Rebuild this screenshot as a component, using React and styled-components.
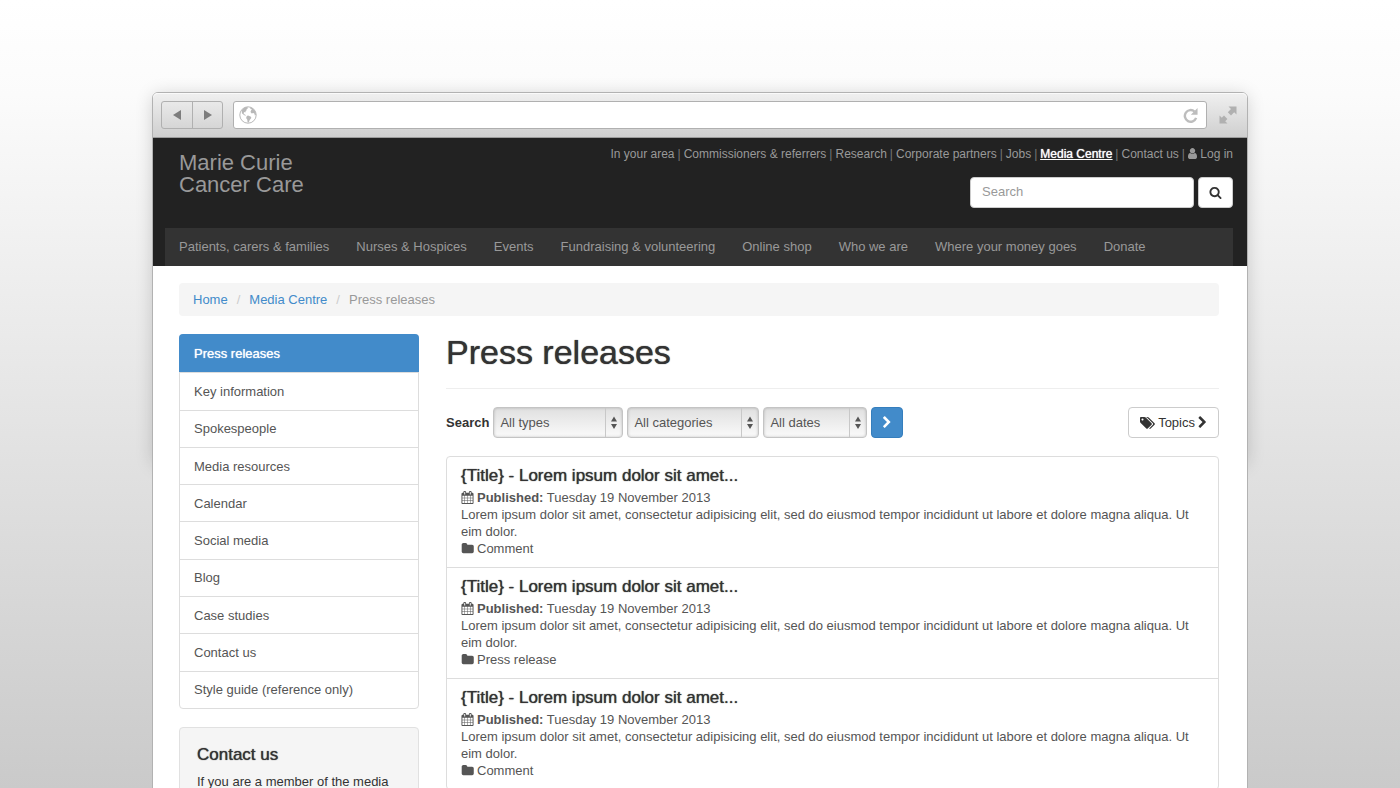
import React from "react";
import styled, { createGlobalStyle } from "styled-components";

const GlobalStyle = createGlobalStyle`
  *, *::before, *::after { box-sizing: border-box; }
  body {
    margin: 0;
    color: #333;
    font-family: "Liberation Sans", Arial, Helvetica, sans-serif;
    font-size: 13px;
    line-height: 17px;
  }
  button, input, select { font: inherit; }
  h1, h2, h3, p, ul, ol { margin: 0; padding: 0; }
  ul, ol { list-style: none; }
  a { text-decoration: none; }
`;

const Stage = styled.div`
  position: relative;
  z-index: 0;
  height: 100vh;
  overflow: hidden;
  padding: 92px 152px 0;
  background: linear-gradient(#fff 0%, #fbfbfb 12%, #cacaca 100%);
`;

const BrowserWindow = styled.div`
  position: relative;
  min-height: 100vh;
  border: 1px solid #b2b2b2;
  border-radius: 6px 6px 0 0;
  background: #fff;
  &::before {
    content: "";
    position: absolute;
    inset: 0 0 auto;
    z-index: -1;
    height: 370px;
    border-radius: 6px;
    box-shadow: 0 2px 18px rgba(0, 0, 0, 0.18);
  }
`;

const Chrome = styled.div`
  display: flex;
  align-items: center;
  gap: 10px;
  height: 45px;
  padding: 0 10px 0 8px;
  border-bottom: 1px solid #9c9c9c;
  border-radius: 5px 5px 0 0;
  background: linear-gradient(#f0f0f0, #cfcfcf);
  box-shadow: inset 0 1px 0 #fafafa;
`;

const HistoryButtons = styled.div`
  display: flex;
  height: 28px;
  border: 1px solid #b0b0b0;
  border-radius: 3px;
`;

const HistoryButton = styled.button`
  display: grid;
  place-items: center;
  width: 30px;
  padding: 0;
  border: 0;
  background: transparent;
  color: #7d7d7d;
  & + & { border-left: 1px solid #b0b0b0; }
`;

const AddressBar = styled.div`
  display: flex;
  flex: 1;
  align-items: center;
  height: 28px;
  margin-right: 2px;
  padding: 0 8px 0 5px;
  border: 1px solid #b0b0b0;
  border-radius: 3px;
  background: #fff;
`;

const AddressInput = styled.input`
  flex: 1;
  min-width: 0;
  border: 0;
  outline: 0;
  background: transparent;
`;

const IconButton = styled.button`
  display: grid;
  place-items: center;
  padding: 0;
  border: 0;
  background: transparent;
`;

const SiteHeader = styled.header`
  padding: 8px 14px 0 12px;
  background: #222;
  color: #999;
`;

const HeaderTop = styled.div`
  display: flex;
  justify-content: space-between;
  height: 82px;
  padding-left: 14px;
`;

const Logo = styled.a`
  padding-top: 6px;
  color: #999;
  font-size: 22px;
  line-height: 22px;
`;

const HeaderTools = styled.div`
  display: flex;
  flex-direction: column;
  align-items: flex-end;
  gap: 14px;
`;

const UtilityLinks = styled.ul`
  display: flex;
  font-size: 12px;
  white-space: nowrap;
  li + li::before { content: "|"; margin: 0 3px; color: #777; }
`;

const UtilityLink = styled.a`
  color: ${(p) => (p.$current ? "#fff" : "#999")};
  text-decoration: ${(p) => (p.$current ? "underline" : "none")};
  text-shadow: ${(p) => (p.$current ? "0 0 1px #fff" : "none")};
  svg { vertical-align: -2px; }
`;

const SearchForm = styled.form`
  display: flex;
  gap: 4px;
`;

const SearchInput = styled.input`
  width: 224px;
  height: 31px;
  padding: 0 11px 2px;
  border: 1px solid #ccc;
  border-radius: 4px;
  background: #fff;
  color: #555;
  &::placeholder { color: #999; opacity: 1; }
`;

const Button = styled.button`
  display: inline-flex;
  align-items: center;
  justify-content: center;
  gap: 3px;
  height: 31px;
  padding: 0 10px;
  border: 1px solid ${(p) => (p.$primary ? "#357ebd" : "#ccc")};
  border-radius: 4px;
  background: ${(p) => (p.$primary ? "#428bca" : "#fff")};
  color: ${(p) => (p.$primary ? "#fff" : "#333")};
`;

const MainNav = styled.ul`
  display: flex;
  height: 38px;
  align-items: center;
  gap: 27px;
  padding: 0 14px 2px;
  background: #333;
  white-space: nowrap;
  a { color: #999; }
`;

const Page = styled.div`
  padding: 17px 28px 0 26px;
`;

const Breadcrumb = styled.ol`
  display: flex;
  align-items: center;
  height: 33px;
  padding: 0 14px;
  border-radius: 4px;
  background: #f5f5f5;
  color: #999;
  a { color: #428bca; }
  li + li::before { content: "/"; margin: 0 9px; color: #ccc; }
`;

const Columns = styled.div`
  display: grid;
  grid-template-columns: 240px 1fr;
  gap: 27px;
  padding-top: 18px;
`;

const SideList = styled.ul`
  display: grid;
  grid-auto-rows: 1fr;
  min-height: 375px;
  border: 1px solid #ddd;
  border-radius: 4px;
`;

const SideItem = styled.li`
  display: flex;
  align-items: center;
  padding: 0 14px;
  & + & { border-top: 1px solid #ddd; }
  a { color: #555; }
  &[aria-current] {
    margin: -1px -1px 0;
    padding: 0 15px;
    border-radius: 4px 4px 0 0;
    background: #428bca;
  }
  &[aria-current] a { color: #fff; text-shadow: 0 0 1px #fff; }
`;

const ContactPanel = styled.section`
  margin-top: 18px;
  padding: 17px;
  border: 1px solid #e1e1e1;
  border-radius: 4px;
  background: #f5f5f5;
`;

const Heading = styled.h3`
  margin-bottom: ${(p) => p.$gap}px;
  color: #333;
  font-size: 17px;
  font-weight: 500;
  line-height: 19px;
  text-shadow: 0 0 1px #333;
`;

const PageTitle = styled.h1`
  padding-bottom: 17px;
  border-bottom: 1px solid #eee;
  font-size: 34px;
  font-weight: 500;
  line-height: 37px;
  text-shadow: 0 0 1px #333;
`;

const Filters = styled.form`
  display: flex;
  align-items: center;
  gap: 4px;
  padding: 18px 0;
`;

const FilterLabel = styled.span`
  font-weight: 700;
`;

const SelectBox = styled.div`
  position: relative;
  width: ${(p) => p.$width}px;
  svg {
    position: absolute;
    top: 1px;
    right: 0;
    pointer-events: none;
  }
`;

const Select = styled.select`
  width: 100%;
  height: 31px;
  padding: 0 6px;
  border: 1px solid #c4c4c4;
  border-radius: 4px;
  appearance: none;
  background: linear-gradient(#e0e0e0, #fafafa);
  box-shadow: inset 0 0 3px rgba(0, 0, 0, 0.22);
  color: #555;
`;

const Topics = styled(Button)`
  margin-left: auto;
  padding: 0 11px;
`;

const Articles = styled.ul`
  border: 1px solid #ddd;
  border-radius: 4px;
`;

const Article = styled.li`
  padding: 9px 14px 10px;
  color: #555;
  & + & { border-top: 1px solid #ddd; }
`;

const Meta = styled.p`
  display: flex;
  align-items: center;
  gap: 3px;
`;

const icons = {
  search: [1792, "M1216 832q0-185-131.5-316.5t-316.5-131.5-316.5 131.5-131.5 316.5 131.5 316.5 316.5 131.5 316.5-131.5 131.5-316.5zm512 832q0 52-38 90t-90 38q-54 0-90-38l-343-342q-179 124-399 124-143 0-273.5-55.5t-225-150-150-225-55.5-273.5 55.5-273.5 150-225 225-150 273.5-55.5 273.5 55.5 225 150 150 225 55.5 273.5q0 220-124 399l343 343q37 37 37 90z"],
  user: [1792, "M1536 1399q0 109-62.5 187t-150.5 78h-854q-88 0-150.5-78t-62.5-187q0-85 8.5-160.5t31.5-152 58.5-131 94-89 134.5-34.5q131 128 313 128t313-128q76 0 134.5 34.5t94 89 58.5 131 31.5 152 8.5 160.5zm-256-887q0 159-112.5 271.5t-271.5 112.5-271.5-112.5-112.5-271.5 112.5-271.5 271.5-112.5 271.5 112.5 112.5 271.5z"],
  tags: [1920, "M448 448q0-53-37.5-90.5t-90.5-37.5-90.5 37.5-37.5 90.5 37.5 90.5 90.5 37.5 90.5-37.5 37.5-90.5zm1067 576q0 53-37 90l-491 492q-39 37-91 37-53 0-90-37l-715-716q-38-37-64.5-101t-26.5-117v-416q0-52 38-90t90-38h416q53 0 117 26.5t102 64.5l715 714q37 39 37 91zm384 0q0 53-37 90l-491 492q-39 37-91 37-36 0-59-14t-53-45l470-470q37-37 37-90 0-52-37-91l-715-714q-38-38-102-64.5t-117-26.5h224q53 0 117 26.5t102 64.5l715 714q37 39 37 91z"],
  calendar: [1792, "M192 1664h288v-288h-288v288zm352 0h320v-288h-320v288zm-352-352h288v-320h-288v320zm352 0h320v-320h-320v320zm-352-384h288v-288h-288v288zm736 736h320v-288h-320v288zm-384-736h320v-288h-320v288zm768 736h288v-288h-288v288zm-384-352h320v-320h-320v320zm-352-864v-288q0-13-9.5-22.5t-22.5-9.5h-64q-13 0-22.5 9.5t-9.5 22.5v288q0 13 9.5 22.5t22.5 9.5h64q13 0 22.5-9.5t9.5-22.5zm736 864h288v-320h-288v320zm-384-384h320v-288h-320v288zm384 0h288v-288h-288v288zm32-480v-288q0-13-9.5-22.5t-22.5-9.5h-64q-13 0-22.5 9.5t-9.5 22.5v288q0 13 9.5 22.5t22.5 9.5h64q13 0 22.5-9.5t9.5-22.5zm384-64v1280q0 52-38 90t-90 38h-1408q-52 0-90-38t-38-90v-1280q0-52 38-90t90-38h128v-96q0-66 47-113t113-47h64q66 0 113 47t47 113v96h384v-96q0-66 47-113t113-47h64q66 0 113 47t47 113v96h128q52 0 90 38t38 90z"],
  folder: [1728, "M1728 608v704q0 92-66 158t-158 66h-1216q-92 0-158-66t-66-158v-960q0-92 66-158t158-66h320q92 0 158 66t66 158v32h672q92 0 158 66t66 158z"],
  chevron: [1792, "M1363 877l-742 742q-19 19-45 19t-45-19l-166-166q-19-19-19-45t19-45l531-531-531-531q-19-19-19-45t19-45l166-166q19-19 45-19t45 19l742 742q19 19 19 45t-19 45z"],
};

const Icon = ({ name, size = 13, width = size, crop = 0 }) => {
  const [w, d] = icons[name];
  return (
    <svg width={width} height={size} viewBox={`${crop} 0 ${w - 2 * crop} 1792`} fill="currentColor" aria-hidden="true">
      <path d={d} />
    </svg>
  );
};

const Triangle = ({ back }) => (
  <svg width="8" height="10" viewBox="0 0 8 10" fill="currentColor" aria-hidden="true">
    <path d={back ? "M8 0v10L0 5z" : "M0 0v10l8-5z"} />
  </svg>
);

const Globe = () => (
  <svg width="18" height="18" viewBox="0 0 18 18" aria-hidden="true">
    <circle cx="9" cy="9" r="8.2" fill="none" stroke="#b8b8b8" />
    <path
      fill="#b8b8b8"
      d="M2.600 4.300 5 2l2-.9 2 .3-.4 1.300-1.200.2.5 1.200-1.500 1.200.6 1-1.500-.3-.9 1.100.5 1.200 1 .2.7 1.200-.6.1-1.500-1-1.600-1.400L2.700 5.800zM7.800 10l1.300-.4 2.900 1.200.3 1.200-1.600 2-1 2.400-1.100.2-.3-2.800-1.200-1.700zM11 1.200l2.800 1.200 2.300 2.700 1 3.500-1.200 1-.6-2-1-.5-1.600.4-1.200-1.500.6-1.800 1-.6-1.600-.7z"
    />
  </svg>
);

const Reload = () => (
  <svg width="15" height="15" viewBox="0 0 16 16" fill="none" aria-hidden="true">
    <path d="M14 10.600A6.200 6.200 0 1 1 12.300 3.800" stroke="#bdbdbd" strokeWidth="2.600" />
    <path d="M15.500 0v7.200H8.300z" fill="#bdbdbd" />
  </svg>
);

const Expand = () => (
  <svg width="18" height="18" viewBox="0 0 18 18" fill="#b0b0b0" aria-hidden="true">
    <path d="M9.500 0.500h8v8l-2.300-2.300-3.200 3.200-3.200-3.200L12 3z" />
    <path d="M8.500 17.500h-8v-8l2.300 2.300L5 9.600 8.400 13l-2.200 2.200z" />
  </svg>
);

const SelectArrows = () => (
  <svg width="18" height="29" viewBox="0 0 18 29" aria-hidden="true">
    <path d="M.5 0v29" stroke="#c8c8c8" />
    <path d="M9 8.500l3 5H6zM9 21l3-5H6z" fill="#555" />
  </svg>
);

const utility = ["In your area", "Commissioners & referrers", "Research", "Corporate partners", "Jobs", "Media Centre", "Contact us"];
const sections = ["Patients, carers & families", "Nurses & Hospices", "Events", "Fundraising & volunteering", "Online shop", "Who we are", "Where your money goes", "Donate"];
const side = ["Press releases", "Key information", "Spokespeople", "Media resources", "Calendar", "Social media", "Blog", "Case studies", "Contact us", "Style guide (reference only)"];
const filters = [["All types", 130], ["All categories", 132], ["All dates", 104]];
const articles = ["Comment", "Press release", "Comment"];

export default function App() {
  return (
    <>
      <GlobalStyle />
      <Stage>
        <BrowserWindow>
          <Chrome>
            <HistoryButtons>
              <HistoryButton type="button" aria-label="Back"><Triangle back /></HistoryButton>
              <HistoryButton type="button" aria-label="Forward"><Triangle /></HistoryButton>
            </HistoryButtons>
            <AddressBar>
              <Globe />
              <AddressInput aria-label="Address" />
              <IconButton type="button" aria-label="Reload"><Reload /></IconButton>
            </AddressBar>
            <IconButton type="button" aria-label="Full screen"><Expand /></IconButton>
          </Chrome>

          <SiteHeader>
            <HeaderTop>
              <Logo href="#">Marie Curie<br />Cancer Care</Logo>
              <HeaderTools>
                <UtilityLinks>
                  {utility.map((t) => (
                    <li key={t}><UtilityLink href="#" $current={t === "Media Centre"}>{t}</UtilityLink></li>
                  ))}
                  <li><UtilityLink href="#"><Icon name="user" width={9} crop={256} /> Log in</UtilityLink></li>
                </UtilityLinks>
                <SearchForm>
                  <SearchInput type="search" placeholder="Search" aria-label="Search the site" />
                  <Button type="button" aria-label="Search"><Icon name="search" /></Button>
                </SearchForm>
              </HeaderTools>
            </HeaderTop>
            <nav>
              <MainNav>
                {sections.map((t) => <li key={t}><a href="#">{t}</a></li>)}
              </MainNav>
            </nav>
          </SiteHeader>

          <Page>
            <Breadcrumb>
              <li><a href="#">Home</a></li>
              <li><a href="#">Media Centre</a></li>
              <li>Press releases</li>
            </Breadcrumb>
            <Columns>
              <aside>
                <SideList>
                  {side.map((t, i) => (
                    <SideItem key={t} aria-current={i === 0 ? "page" : undefined}><a href="#">{t}</a></SideItem>
                  ))}
                </SideList>
                <ContactPanel>
                  <Heading $gap={9}>Contact us</Heading>
                  <p>If you are a member of the media</p>
                </ContactPanel>
              </aside>
              <main>
                <PageTitle>Press releases</PageTitle>
                <Filters>
                  <FilterLabel>Search</FilterLabel>
                  {filters.map(([t, w]) => (
                    <SelectBox key={t} $width={w}>
                      <Select aria-label={t}><option>{t}</option></Select>
                      <SelectArrows />
                    </SelectBox>
                  ))}
                  <Button $primary type="button" aria-label="Apply filters"><Icon name="chevron" width={10} crop={256} /></Button>
                  <Topics type="button">
                    <Icon name="tags" size={14} width={15} />Topics<Icon name="chevron" width={9} crop={300} />
                  </Topics>
                </Filters>
                <Articles>
                  {articles.map((kind, i) => (
                    <Article key={i}>
                      <Heading $gap={4}>{"{Title} - Lorem ipsum dolor sit amet..."}</Heading>
                      <Meta><Icon name="calendar" /><span><b>Published:</b> Tuesday 19 November 2013</span></Meta>
                      <p>Lorem ipsum dolor sit amet, consectetur adipisicing elit, sed do eiusmod tempor incididunt ut labore et dolore magna aliqua. Ut eim dolor.</p>
                      <Meta><Icon name="folder" />{kind}</Meta>
                    </Article>
                  ))}
                </Articles>
              </main>
            </Columns>
          </Page>
        </BrowserWindow>
      </Stage>
    </>
  );
}
